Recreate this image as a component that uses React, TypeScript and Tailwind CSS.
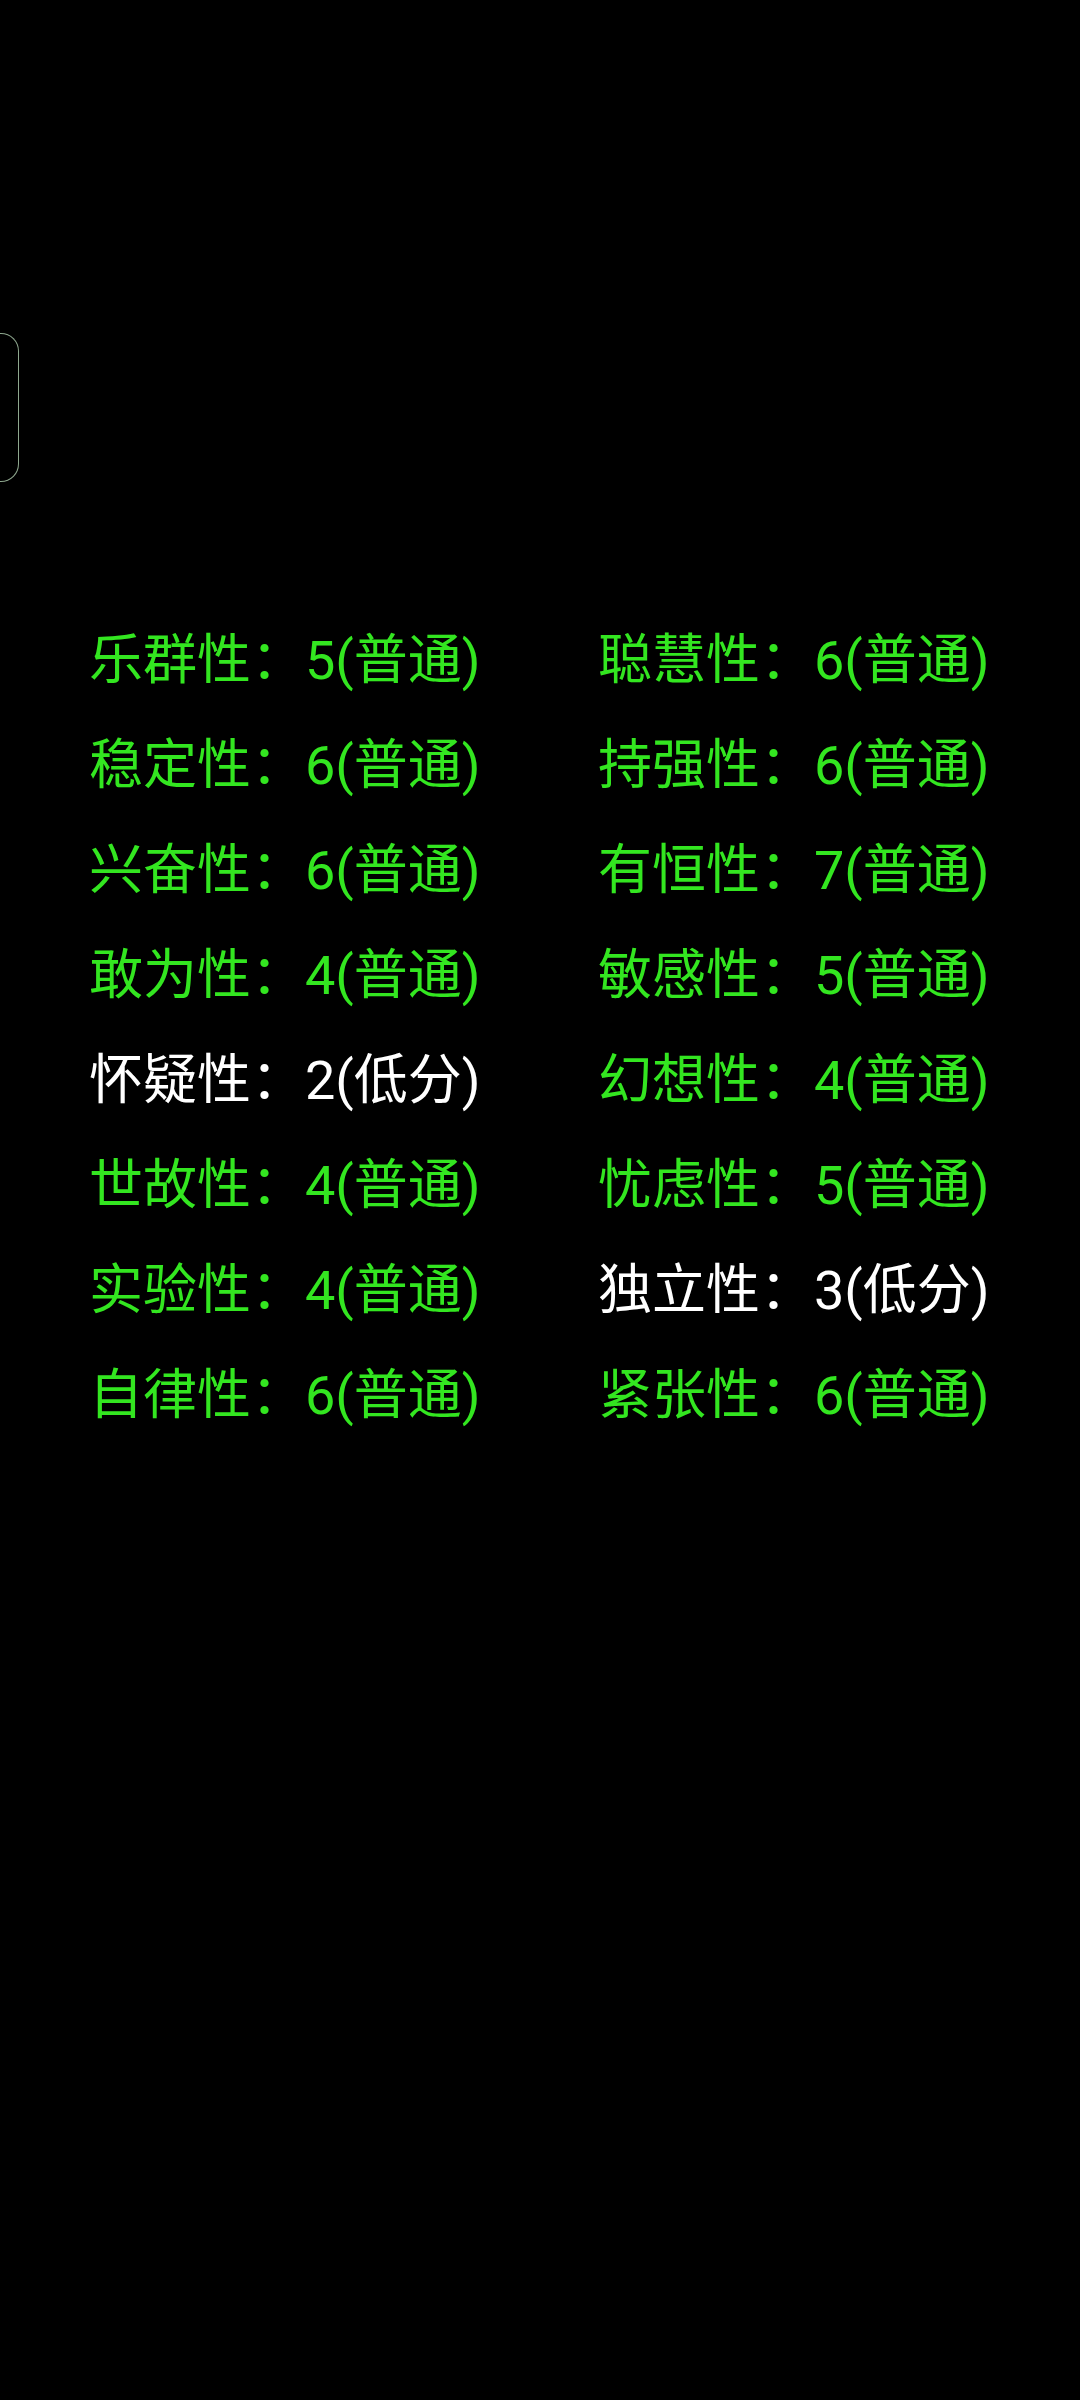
const rows: [string, string, boolean][] = [
  ["乐群性", "5(普通)", false],
  ["聪慧性", "6(普通)", false],
  ["稳定性", "6(普通)", false],
  ["持强性", "6(普通)", false],
  ["兴奋性", "6(普通)", false],
  ["有恒性", "7(普通)", false],
  ["敢为性", "4(普通)", false],
  ["敏感性", "5(普通)", false],
  ["怀疑性", "2(低分)", true],
  ["幻想性", "4(普通)", false],
  ["世故性", "4(普通)", false],
  ["忧虑性", "5(普通)", false],
  ["实验性", "4(普通)", false],
  ["独立性", "3(低分)", true],
  ["自律性", "6(普通)", false],
  ["紧张性", "6(普通)", false],
];

export default function App() {
  return (
    <div
      className="w-[1080px] h-[2400px] bg-black flex flex-col"
      style={{ fontFamily: 'Roboto, "Noto Sans CJK SC", sans-serif' }}
    >
      <div className="h-[333px]" />
      <div className="w-[19px] h-[149px] rounded-r-[18px] border border-l-0 border-[#8fa88f]" />
      <div className="grid grid-cols-[509px_1fr] pl-[89px] mt-[126px]">
        {rows.map(([name, score, low]) => (
          <div
            key={name}
            className={`text-[54px] leading-[105px] whitespace-nowrap ${low ? "text-white" : "text-[#33e620]"}`}
          >
            {name}：{score}
          </div>
        ))}
      </div>
    </div>
  );
}
